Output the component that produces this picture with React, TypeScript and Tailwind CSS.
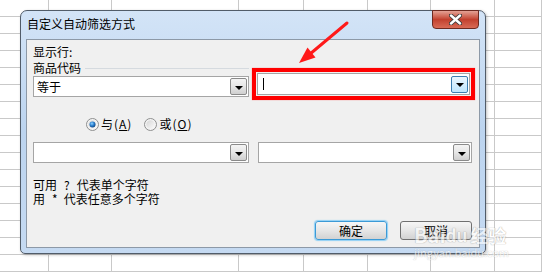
const FONT = "font-['Noto_Sans_CJK_SC','Noto_Sans',sans-serif]";

function Caret() {
  return (
    <span className="w-0 h-0 mt-[2px] border-l-[4px] border-r-[4px] border-t-[4px] border-l-transparent border-r-transparent border-t-black" />
  );
}

function Combo({ w, text, hot, cursor }: { w: string; text?: string; hot?: boolean; cursor?: boolean }) {
  return (
    <div className={`${w} h-full flex items-center border border-[#a5a5a5] bg-white pl-[3px] pr-[1px]`}>
      <div className="flex-1 flex items-center text-[12px] leading-[14px]">
        {text}
        {cursor && <span className="ml-[2px] w-[1px] h-[12px] bg-black" />}
      </div>
      <div
        className={
          hot
            ? "w-[17px] h-[17px] flex items-center justify-center rounded-[2px] border border-[#3c7fb1] bg-linear-to-b from-[#eaf6fd] to-[#bee6fd]"
            : "w-[17px] h-[17px] flex items-center justify-center rounded-[2px] border border-[#8a8a8a] bg-linear-to-b from-[#f4f4f4] via-[#e6e6e6] to-[#cfcfcf]"
        }
      >
        <Caret />
      </div>
    </div>
  );
}

function Radio({ on }: { on?: boolean }) {
  return (
    <svg width="13" height="13" viewBox="0 0 13 13">
      <defs>
        <linearGradient id={on ? "rg1" : "rg2"} x1="0" y1="0" x2="1" y2="1">
          <stop offset="0" stopColor="#d6d6d6" />
          <stop offset="1" stopColor="#fbfbfb" />
        </linearGradient>
        <radialGradient id="dot" cx="0.4" cy="0.35" r="0.7">
          <stop offset="0" stopColor="#8fd2ff" />
          <stop offset="0.5" stopColor="#2a7fcf" />
          <stop offset="1" stopColor="#0b3f7a" />
        </radialGradient>
      </defs>
      <circle cx="6.5" cy="6.5" r="6" fill="#f4f4f4" stroke="#8e8f8f" />
      <circle cx="6.5" cy="6.5" r="4.2" fill={`url(#${on ? "rg1" : "rg2"})`} />
      {on && <circle cx="6.5" cy="6.5" r="3" fill="url(#dot)" />}
    </svg>
  );
}

function Btn({ label, def }: { label: string; def?: boolean }) {
  return (
    <div
      className={`w-[72px] h-[19px] flex items-center justify-center rounded-[3px] border text-[12px] leading-[14px] bg-linear-to-b from-[#f6f6f6] via-[#e6e6e6] to-[#d2d2d2] ${
        def ? "border-[#3c9ad6] shadow-[0_0_1px_1px_#8fd0f5]" : "border-[#707070]"
      }`}
    >
      {label}
    </div>
  );
}

export default function App() {
  const cols = ["w-[49px]", "w-[63px]", "w-[127px]", "w-[65px]", "w-[64px]", "w-[63px]", "w-[64px]", "flex-1"];

  return (
    <div className={`relative w-[542px] h-[272px] overflow-hidden bg-white text-black ${FONT}`}>
      {/* sheet grid */}
      <div className="flex h-full bg-[repeating-linear-gradient(to_bottom,transparent_0px,transparent_16px,#c9c9c9_16px,#c9c9c9_17px)]">
        {cols.map((c, i) => (
          <div key={i} className={`${c} h-full border-r border-[#c9c9c9]`} />
        ))}
      </div>

      {/* dialog window */}
      <div className="absolute left-[20px] top-[10px] w-[466px] h-[244px] flex flex-col rounded-t-[7px] rounded-b-[5px] border border-[#515c69] bg-linear-to-b from-[#d3e4f7] via-[#bcd4ef] to-[#c5daf2] shadow-[1px_1px_3px_rgba(0,0,0,0.25)]">
        <div className="h-[28px] flex items-start justify-between">
          <div className="pl-[6px] pt-[6px] text-[12px] leading-[14px]">自定义自动筛选方式</div>
          <div className="-mt-[1px] mr-[6px] w-[47px] h-[19px] flex items-center justify-center rounded-b-[4px] border border-[#6e2a20] bg-linear-to-b from-[#e3a195] via-[#c2402e] to-[#d86a55]">
            <svg width="13" height="11" viewBox="0 0 13 11">
              <path d="M2 1.5 L11 9.5 M11 1.5 L2 9.5" stroke="#3b3b3b" strokeWidth="4.2" strokeLinecap="round" />
              <path d="M2 1.5 L11 9.5 M11 1.5 L2 9.5" stroke="#ffffff" strokeWidth="2.4" strokeLinecap="round" />
            </svg>
          </div>
        </div>

        <div className="mx-[5px] h-[209px] border border-[#8d99a7] bg-[#f0f0f0] pl-[6px] pt-[5px] flex flex-col text-[12px] leading-[14px]">
          <div className="h-[14px]">显示行:</div>

          <div className="mt-[2px] flex">
            <div className="w-[216px] flex flex-col">
              <div className="h-[14px] flex items-center">
                <span>商品代码</span>
                <span className="flex-1 ml-[4px] h-[1px] bg-[#d5dadf]" />
              </div>
              <div className="mt-[1px] h-[21px] flex">
                <Combo w="w-[216px]" text="等于" />
              </div>
            </div>
            <div className="ml-[3px] mt-[7px] w-[223px] h-[32px] border-[4px] border-[#ff0000] p-[1px] shadow-[0_0_1px_#ff7070]">
              <Combo w="w-full" hot cursor />
            </div>
          </div>

          <div className="mt-[17px] h-[14px] flex items-center">
            <div className="ml-[53px] flex items-center gap-[2px]">
              <Radio on />
              <span className="tracking-[1px]">
                与(<span className="underline">A</span>)
              </span>
            </div>
            <div className="ml-[12px] flex items-center gap-[2px]">
              <Radio />
              <span className="tracking-[1px]">
                或(<span className="underline">O</span>)
              </span>
            </div>
          </div>

          <div className="mt-[11px] h-[21px] flex">
            <Combo w="w-[216px]" />
            <div className="ml-[9px] w-[214px] h-full flex">
              <Combo w="w-[214px]" />
            </div>
          </div>

          <div className="mt-[15px] flex flex-col">
            <div className="h-[14px] flex items-center">
              <span>可用</span>
              <span className="ml-[7px]">?</span>
              <span className="ml-[7px]">代表单个字符</span>
            </div>
            <div className="h-[14px] flex items-center">
              <span>用</span>
              <span className="ml-[7px]">*</span>
              <span className="ml-[6px]">代表任意多个字符</span>
            </div>
          </div>

          <div className="mt-[15px] flex">
            <div className="ml-[282px]">
              <Btn label="确定" def />
            </div>
            <div className="ml-[13px]">
              <Btn label="取消" />
            </div>
          </div>
        </div>
      </div>

      {/* red arrow annotation */}
      <svg className="absolute left-0 top-0" width="542" height="272" viewBox="0 0 542 272">
        <line x1="347" y1="23" x2="310" y2="54" stroke="#ff1a1a" strokeWidth="3" strokeLinecap="round" />
        <polygon points="299,63 307.5,47.5 315.5,57.5" fill="#ff1a1a" />
      </svg>

      {/* watermark */}
      <div className="absolute left-[414px] top-[224px] flex flex-col items-start opacity-60">
        <div className="flex items-end text-white font-bold text-[20px] leading-[22px] [text-shadow:0_0_1px_#8a8a8a,0_0_1px_#8a8a8a]">
          <span>Bai</span>
          <span className="text-[17px]">du</span>
          <span className="ml-[3px] text-[18px]">经验</span>
        </div>
        <div className="text-white text-[11px] leading-[12px] [text-shadow:0_0_1px_#8a8a8a]">jingyan.baidu.com</div>
      </div>
    </div>
  );
}
